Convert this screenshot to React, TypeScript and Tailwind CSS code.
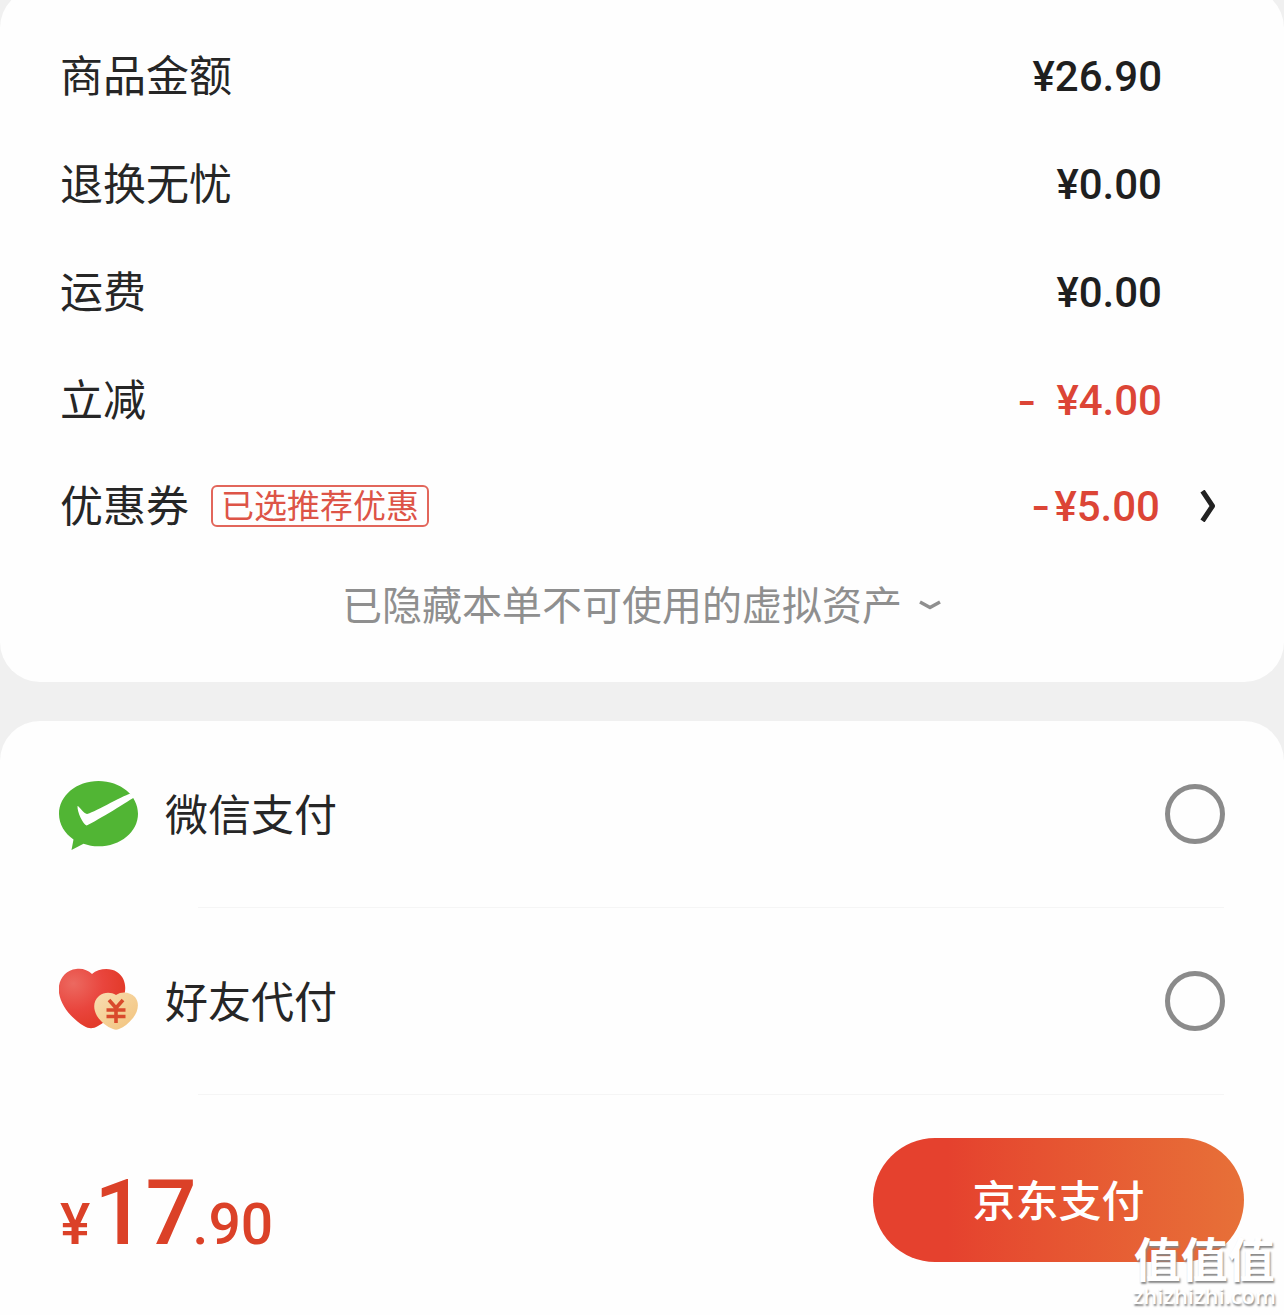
import { useState } from 'react'

const prices = [
  { label: '商品金额', amount: '¥26.90' },
  { label: '退换无忧', amount: '¥0.00' },
  { label: '运费', amount: '¥0.00' },
  { label: '立减', amount: '¥4.00', discount: true },
]

const WechatPayIcon = () => (
  <svg viewBox="0 0 80 80" className="size-20 shrink-0" aria-hidden="true">
    <path
      d="M39.500 7C17.500 7 0 21.500 0 40c0 10.500 5.800 19.500 14.500 25.500L12.500 76l12-6.300c4.700 1.700 9.700 2.600 15 2.600 22 0 39.500-14.500 39.500-32.600C79 21.500 61.500 7 39.500 7Z"
      fill="#51b534"
    />
    <path
      d="M18.500 32c1.500 0 6.500 7.800 9.500 8 3 .2 36-18.300 43-20.300l5 3C66 29.500 33 49.500 27.500 51.500 24 50 18 38 18.500 32Z"
      fill="#fff"
    />
  </svg>
)

const FriendPayIcon = () => (
  <svg viewBox="0 0 80 80" className="size-20 shrink-0" aria-hidden="true">
    <defs>
      <radialGradient id="heart" cx="0.22" cy="0.25" r="0.75">
        <stop offset="0" stopColor="#ec6960" />
        <stop offset="0.6" stopColor="#e9453d" />
        <stop offset="1" stopColor="#e33b2b" />
      </radialGradient>
      <linearGradient id="coin" x1="0" y1="0" x2="1" y2="1">
        <stop offset="0" stopColor="#f8deb2" />
        <stop offset="1" stopColor="#f2c27b" />
      </linearGradient>
    </defs>
    <path
      d="M33 13C39 8 50 6 58 11c9 6 10 17 6 27C59 51 48 60 39 65c-5 3-9 3-14 0C13 58 2 45 0 32-2 20 6 9 17 8c6-1 12 1 16 5Z"
      fill="url(#heart)"
    />
    <path
      d="M57 34c6-4 14-3 19 2 5 6 3 15-2 21-4 5-9 9-14 11-2 1-4 1-6 0-6-2-12-7-16-13-4-7-4-15 2-20 5-4 12-4 17-1Z"
      fill="url(#coin)"
    />
    <path d="m50 39 7 8 7-8M47.500 49h19M47.500 55.500h19M57 47v15" fill="none" stroke="#d94a2c" strokeWidth="3.600" />
  </svg>
)

const methods = [
  { id: 'wechat', name: '微信支付', Icon: WechatPayIcon },
  { id: 'friend', name: '好友代付', Icon: FriendPayIcon },
]

export default function App() {
  const [method, setMethod] = useState('')

  return (
    <main className="relative min-h-screen overflow-hidden bg-[#f0f0f0] font-['Noto_Sans_CJK_SC',sans-serif] text-[43px] text-[#262626]">
      {/* Price details */}
      <section className="-mt-3 rounded-[40px] bg-[#fefefe] pt-[34px] pb-[30px]">
        <dl>
          {prices.map(({ label, amount, discount }) => (
            <div key={label} className="flex h-[108px] items-center justify-between pr-[122px] pl-[60px]">
              <dt className="pb-1.5">{label}</dt>
              <dd
                className={`flex items-center font-[Roboto,sans-serif] text-[42px] font-medium ${discount ? 'text-[#dc4536]' : 'text-[#1f1f1f]'}`}
              >
                {discount && <span className="mr-5 font-[Inter,sans-serif]">-</span>}
                {amount}
              </dd>
            </div>
          ))}
        </dl>
        <button type="button" className="flex h-[104px] w-full items-center pr-[68px] pl-[60px] text-left">
          <span className="pb-1.5">优惠券</span>
          <span className="ml-[22px] flex h-[42px] items-center rounded-md border-2 border-[#e2665b] px-2 pb-0.5 text-[33px] text-[#dd5447]">
            已选推荐优惠
          </span>
          <span className="ml-auto font-[Roboto,sans-serif] text-[42px] font-medium text-[#dc4536]">
            <span className="mr-1 font-[Inter,sans-serif]">-</span>¥5.00
          </span>
          <svg viewBox="0 0 16 32" className="ml-10 h-8 w-4" fill="none" stroke="#222" strokeWidth="5" aria-hidden="true">
            <path d="M2.500 1 12.500 16 2.500 31" strokeLinejoin="round" />
          </svg>
        </button>
        <button type="button" className="flex h-[94px] w-full items-center justify-center gap-4 text-[40px] text-[#8f8f8f]">
          <span className="pb-1">已隐藏本单不可使用的虚拟资产</span>
          <svg viewBox="0 0 24 12" className="h-3 w-6" fill="none" stroke="#8f8f8f" strokeWidth="3.500" aria-hidden="true">
            <path d="M2 3 12 8.500 22 3" strokeLinejoin="round" />
          </svg>
        </button>
      </section>

      {/* Payment methods */}
      <section className="mt-[39px] rounded-t-[40px] bg-[#fefefe]">
        {methods.map(({ id, name, Icon }) => (
          <div key={id}>
            <label className="flex h-[186px] items-center pr-[59px] pl-[59px]">
              <Icon />
              <span className="ml-[26px] pb-1">{name}</span>
              <input
                type="radio"
                name="method"
                value={id}
                checked={method === id}
                onChange={() => setMethod(id)}
                className="ml-auto size-[60px] appearance-none rounded-full border-[5px] border-[#8b8b8b] checked:border-[16px] checked:border-[#e5432e]"
              />
            </label>
            <div className="mr-[60px] ml-[198px] h-px bg-[#f5f5f5]" />
          </div>
        ))}
      </section>

      {/* Pay bar */}
      <footer className="flex items-center justify-between bg-[#fefefe] pt-[43px] pr-10 pb-[53px] pl-[60px]">
        <p className="flex items-baseline pt-7 font-[Roboto,sans-serif] text-[57px] leading-none font-medium text-[#db4128]">
          <span className="mr-1">¥</span>
          <span className="text-[90px]">17</span>
          <span className="-ml-1">.90</span>
        </p>
        <button
          type="button"
          className="h-[124px] w-[371px] rounded-full bg-linear-to-r from-[#e5412e] from-20% to-[#e77038] pb-1 font-medium text-white"
        >
          京东支付
        </button>
      </footer>

      <div className="pointer-events-none absolute right-2 bottom-1.5 flex flex-col items-center text-white [text-shadow:1px_2px_2px_#888]">
        <span className="text-[47px] leading-[48px] font-bold">值值值</span>
        <span className="font-['Open_Sans',sans-serif] text-[22px] leading-7 font-semibold">zhizhizhi.com</span>
      </div>
    </main>
  )
}
